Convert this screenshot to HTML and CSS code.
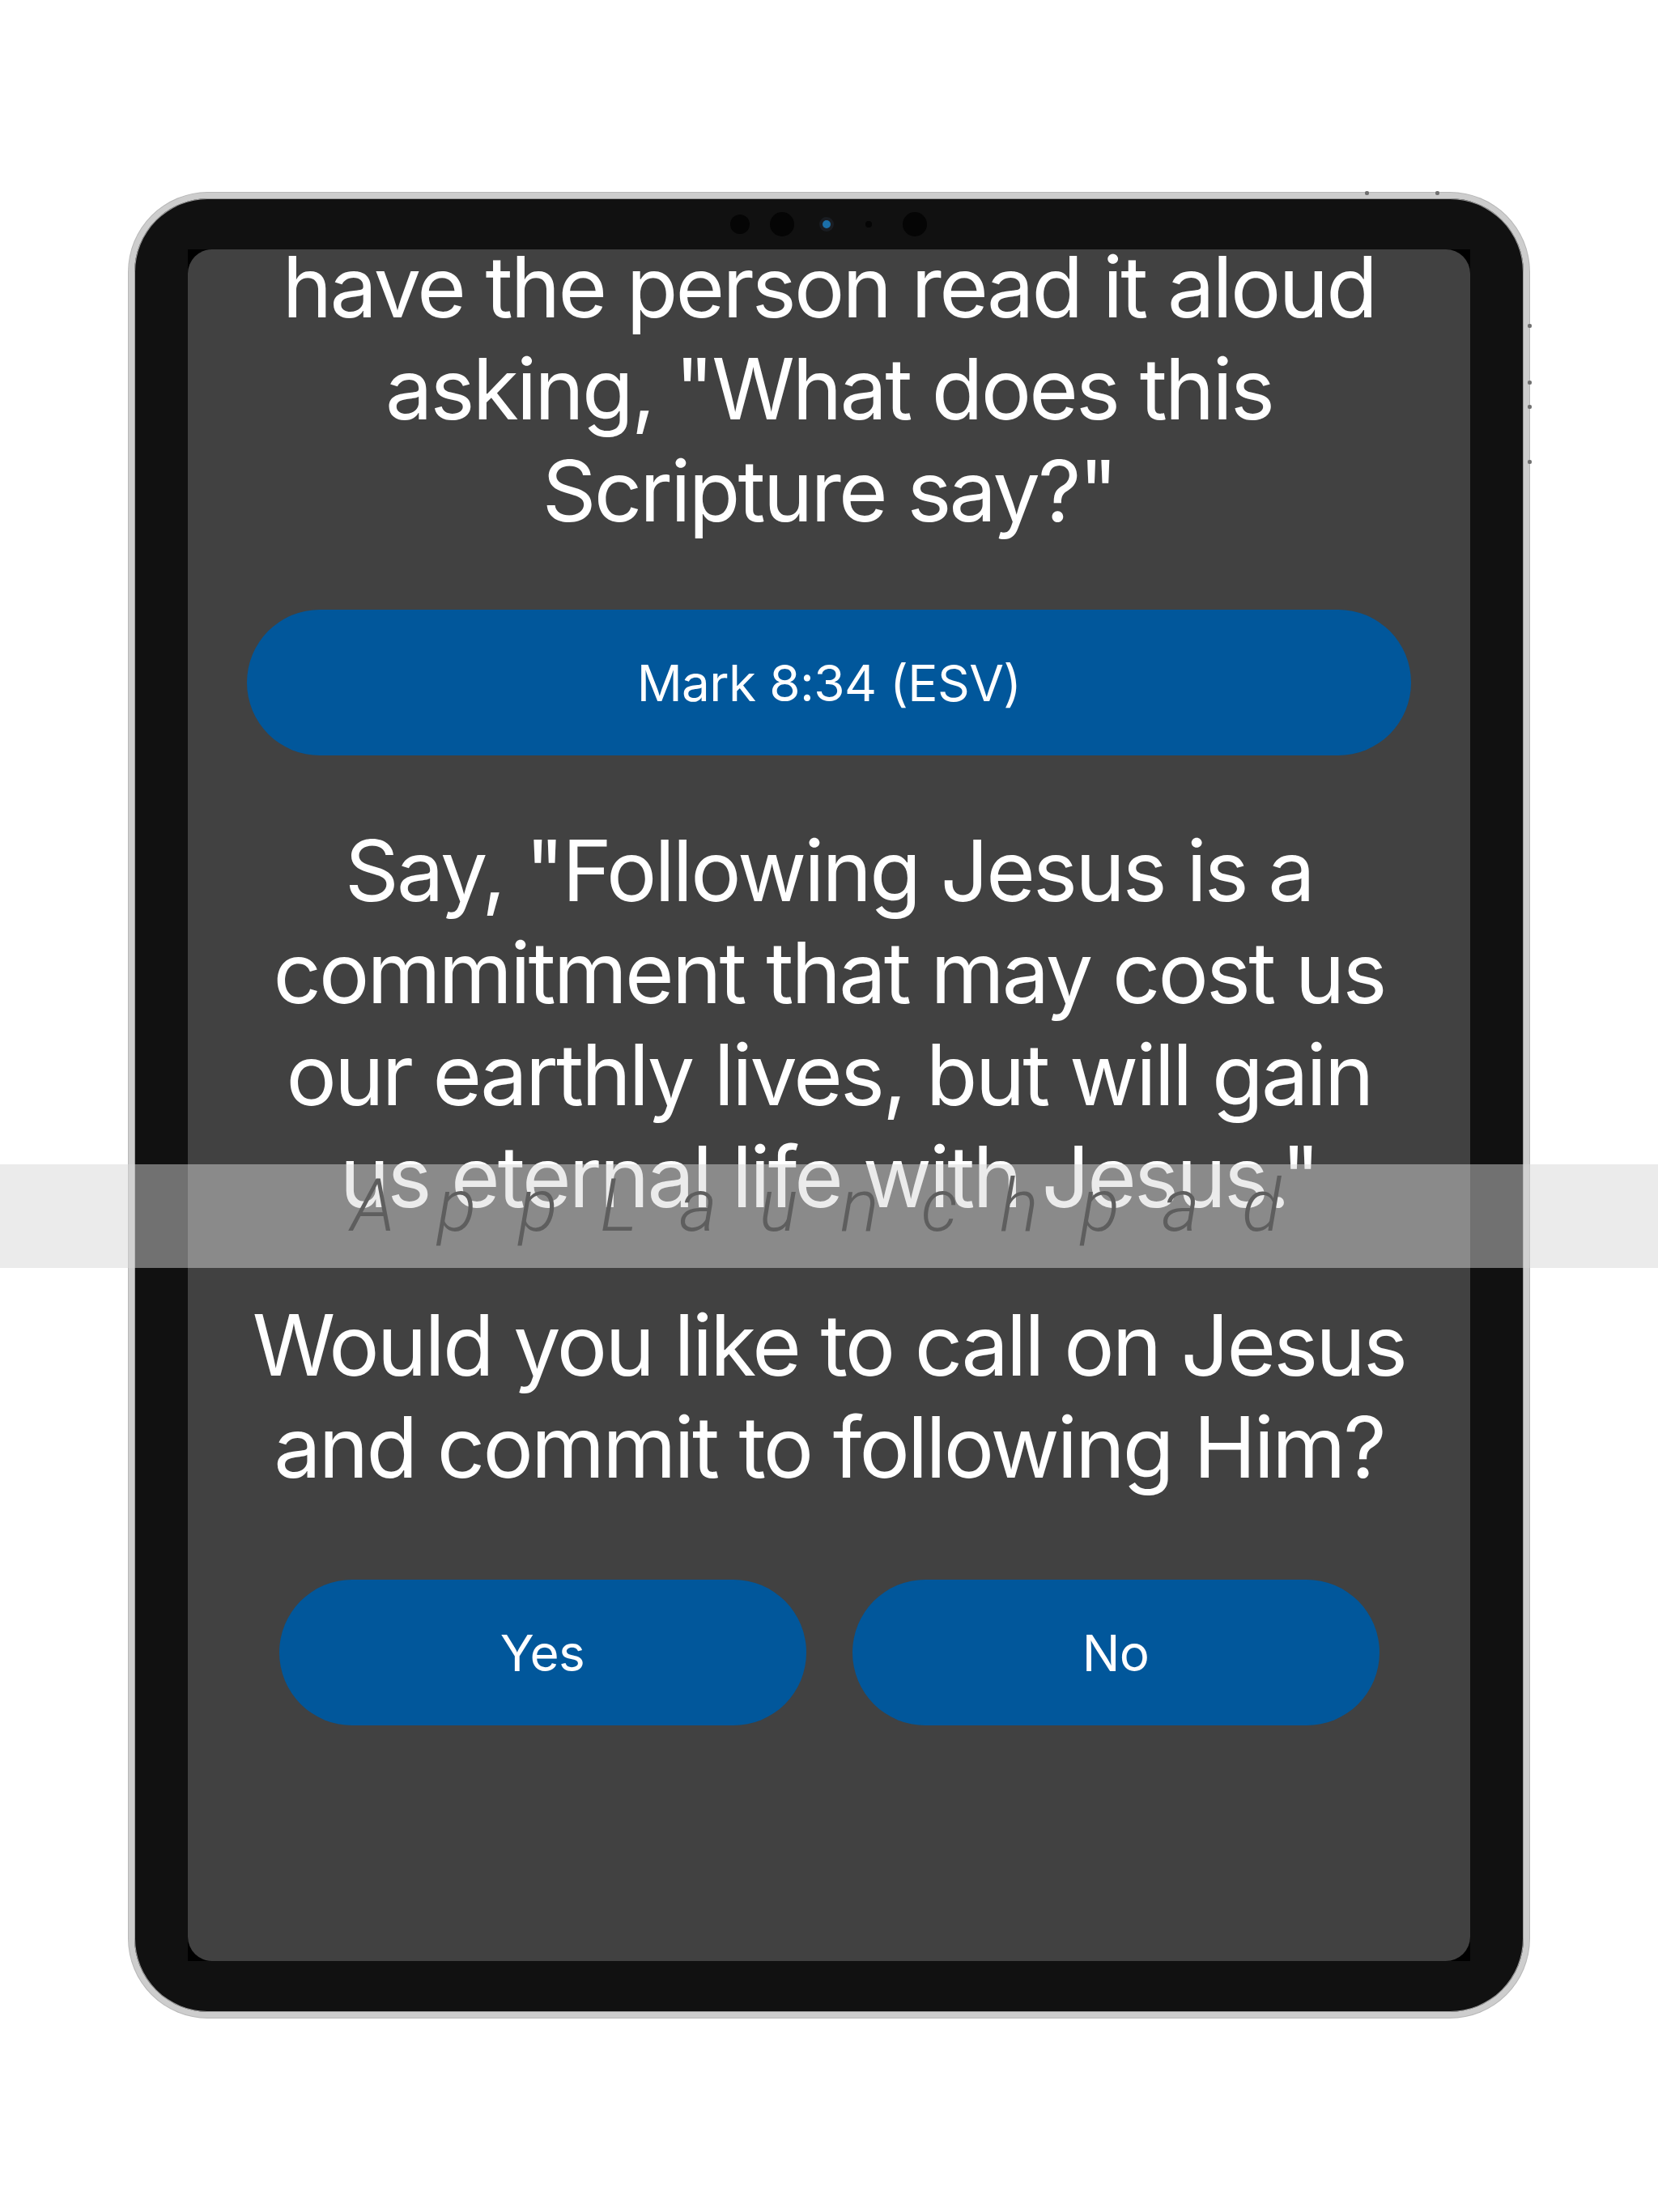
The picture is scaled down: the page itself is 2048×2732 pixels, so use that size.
FILE: index.html
```html
<!DOCTYPE html>
<html lang="en">
<head>
<meta charset="utf-8">
<title>Call on Jesus</title>
<link rel="stylesheet" href="styles.css">
</head>
<body>
<div class="page">
  <div class="device">
    <div class="camera">
      <span class="lens lens-a"></span>
      <span class="lens lens-b"></span>
      <span class="lens lens-c"></span>
      <span class="lens lens-d"></span>
      <span class="lens lens-e"></span>
    </div>
    <span class="nub nub-top1"></span>
    <span class="nub nub-top2"></span>
    <span class="nub nub-r1"></span>
    <span class="nub nub-r2"></span>
    <span class="nub nub-r3"></span>
    <span class="nub nub-r4"></span>
    <div class="screen">
      <div class="screen-inner">
        <div class="content">
          <p class="prompt first">have the person read it aloud asking, "What does this Scripture say?"</p>
          <button class="pill ref-btn">Mark 8:34 (ESV)</button>
          <p class="prompt p2">Say, "Following Jesus is a commitment that may cost us our earthly lives, but will gain us eternal life with Jesus."</p>
          <p class="prompt p3">Would you like to call on Jesus and commit to following Him?</p>
          <div class="choices">
            <button class="pill choice">Yes</button>
            <button class="pill choice">No</button>
          </div>
        </div>
      </div>
    </div>
  </div>
  <div class="band"><span class="watermark">AppLaunchpad</span></div>
</div>
</body>
</html>
```

FILE: styles.css
```css
html, body {
  margin: 0;
  padding: 0;
  background: #ffffff;
}

.page {
  position: relative;
  width: 2048px;
  height: 2732px;
  display: flex;
  justify-content: center;
  align-items: flex-start;
  padding-top: 238px;
  box-sizing: border-box;
}

.device {
  position: relative;
  width: 1730px;
  height: 2254px;
  box-sizing: border-box;
  border: 7px solid #cdcdcd;
  border-radius: 98px;
  background: #111111;
  padding: 63px 66px;
  box-shadow: inset 0 0 0 1px #9a9a9a, 0 0 0 1px #b8b8b8;
}

.camera {
  position: absolute;
  left: 736px;
  top: 17px;
  height: 30px;
  display: flex;
  align-items: center;
}

.lens {
  display: block;
  border-radius: 50%;
  background: #050505;
}

.lens-a { width: 24px; height: 24px; }
.lens-b { width: 30px; height: 30px; margin-left: 25px; }
.lens-c {
  width: 10px;
  height: 10px;
  margin-left: 35px;
  background: #1b6fa8;
  box-shadow: 0 0 0 4px #1a1d22;
}
.lens-d { width: 8px; height: 8px; margin-left: 43px; }
.lens-e { width: 30px; height: 30px; margin-left: 38px; }

.nub {
  position: absolute;
  width: 5px;
  height: 5px;
  border-radius: 2px;
  background: #6f6f6f;
}
.nub-top1 { top: -9px; left: 1520px; }
.nub-top2 { top: -9px; left: 1607px; }
.nub-r1 { right: -10px; top: 155px; }
.nub-r2 { right: -10px; top: 225px; }
.nub-r3 { right: -10px; top: 255px; }
.nub-r4 { right: -10px; top: 323px; }

.screen {
  width: 100%;
  height: 100%;
  background: #000000;
}

.screen-inner {
  width: 100%;
  height: 100%;
  background: #414141;
  border-radius: 30px;
  overflow: hidden;
}

.content {
  display: flex;
  flex-direction: column;
  align-items: center;
  padding: 0 73px;
  margin-top: -17px;
}

.prompt {
  margin: 0;
  width: 100%;
  color: #ffffff;
  font-family: Inter, "Noto Sans", sans-serif;
  font-weight: 400;
  font-size: 104px;
  line-height: 126px;
  letter-spacing: -2.8px;
  text-align: center;
}

.pill {
  border: none;
  background: #01579b;
  color: #ffffff;
  font-family: Inter, "Noto Sans", sans-serif;
  font-weight: 400;
  font-size: 62px;
  letter-spacing: -0.6px;
  height: 180px;
  border-radius: 90px;
  padding: 0;
}

.ref-btn {
  margin-top: 84px;
  width: 100%;
}

.p2 { margin-top: 79px; }
.p3 { margin-top: 82px; }

.choices {
  margin-top: 101px;
  display: flex;
  gap: 57px;
}

.choice {
  width: 651px;
}

.band {
  position: absolute;
  left: 0;
  top: 1438px;
  width: 2048px;
  height: 128px;
  background: rgba(214, 214, 214, 0.49);
  display: flex;
  justify-content: center;
  align-items: flex-start;
}

.watermark {
  margin-top: 0px;
  padding-left: 20px;
  font-family: Roboto, "Liberation Sans", sans-serif;
  font-style: italic;
  font-weight: 300;
  font-size: 90px;
  line-height: 104px;
  letter-spacing: 52px;
  color: #5e5e5e;
}
```
